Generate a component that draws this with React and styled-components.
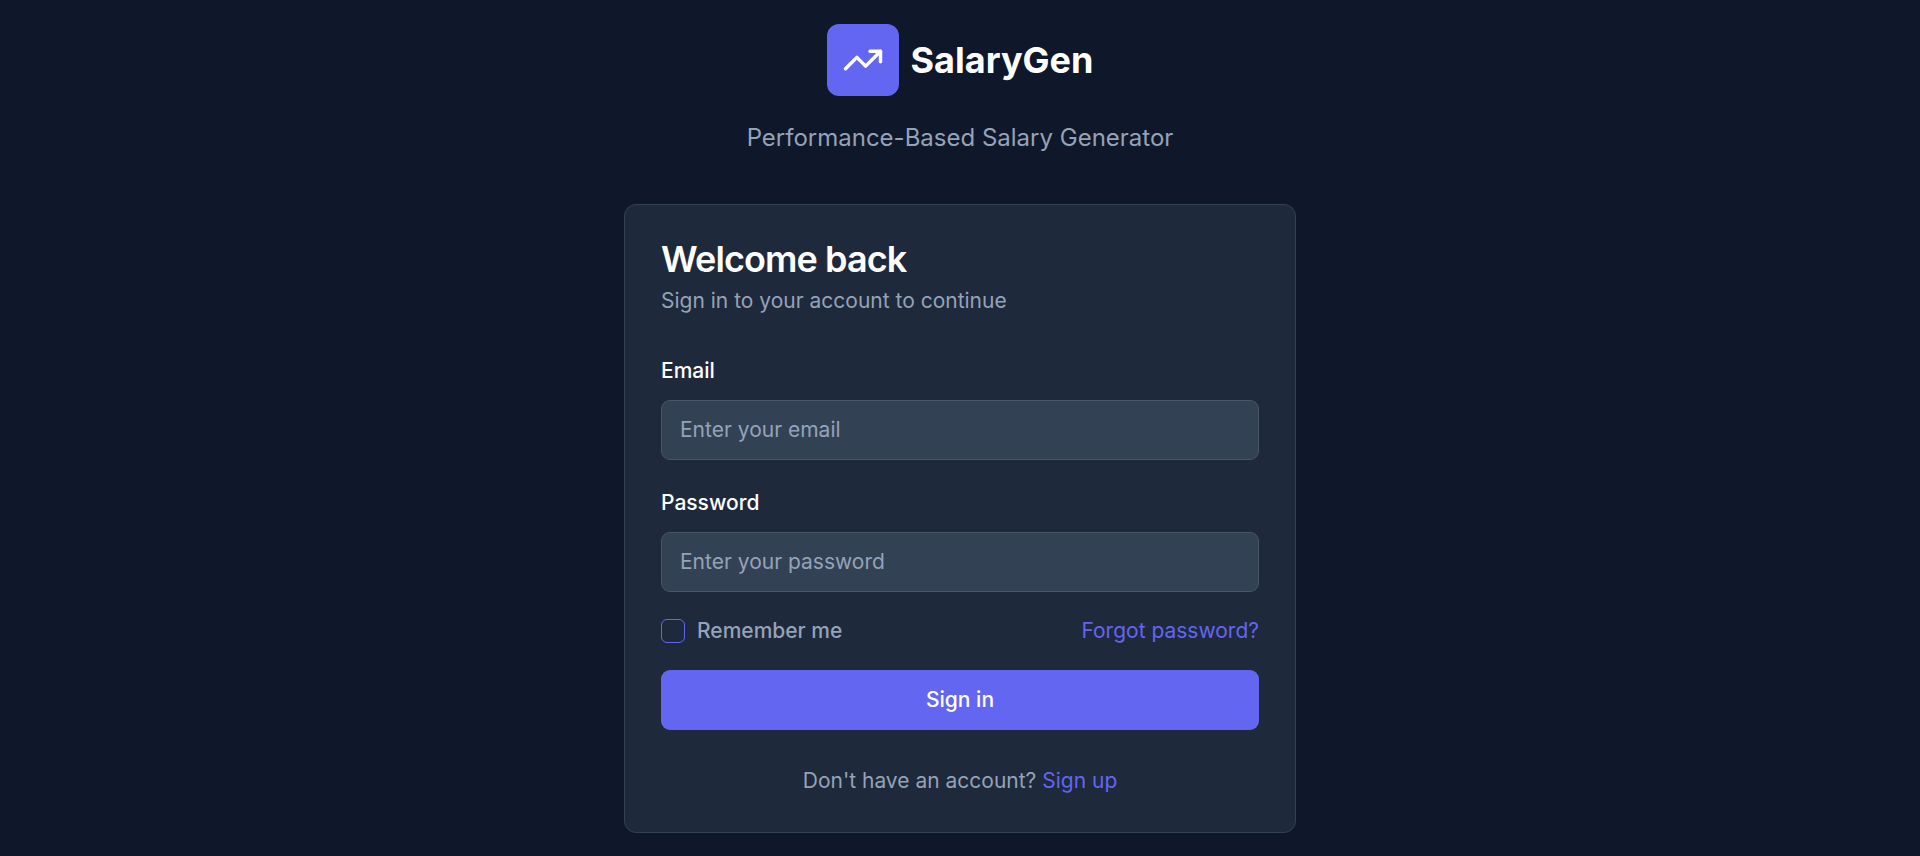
import React from "react";
import styled, { createGlobalStyle } from "styled-components";
import { TrendingUp } from "lucide-react";

const GlobalStyle = createGlobalStyle`
  *, *::before, *::after { box-sizing: border-box; }
  body {
    margin: 0;
    background: #0f172a;
    color: #ffffff;
    font-family: Inter, "Liberation Sans", sans-serif;
    font-size: 24px;
    line-height: 36px;
  }
`;

const Page = styled.main`
  min-height: 100vh;
  display: flex;
  align-items: center;
  justify-content: center;
  padding: 0 24px;
`;

const Column = styled.div`
  width: 100%;
  max-width: 672px;
  display: flex;
  flex-direction: column;
  gap: 48px;
`;

const Brand = styled.header`
  display: flex;
  flex-direction: column;
  align-items: center;
  gap: 24px;
`;

const BrandRow = styled.div`
  display: flex;
  align-items: center;
  gap: 12px;
`;

const Logo = styled.div`
  width: 72px;
  height: 72px;
  display: flex;
  align-items: center;
  justify-content: center;
  border-radius: 12px;
  background: #6366f1;
`;

const BrandName = styled.h1`
  margin: 0;
  font-size: 36px;
  line-height: 48px;
  font-weight: 700;
`;

const Tagline = styled.p`
  margin: 0;
  color: #94a3b8;
  text-align: center;
`;

const Card = styled.section`
  display: flex;
  flex-direction: column;
  gap: 36px;
  padding: 36px;
  border: 1px solid #334155;
  border-radius: 12px;
  background: #1e293b;
`;

const CardHeader = styled.div`
  display: flex;
  flex-direction: column;
  gap: 9px;
`;

const CardTitle = styled.h2`
  margin: 0;
  font-size: 36px;
  line-height: 36px;
  font-weight: 600;
  letter-spacing: -0.025em;
`;

const Text = styled.p`
  margin: 0;
  color: #94a3b8;
  font-size: 21px;
  line-height: 30px;
  text-align: ${({ $align }) => $align || "left"};
`;

const Form = styled.form`
  display: flex;
  flex-direction: column;
  gap: 24px;
`;

const Field = styled.div`
  display: flex;
  flex-direction: column;
  gap: 12px;
`;

const LabelRow = styled.div`
  height: 36px;
`;

const Label = styled.label`
  font-size: 21px;
  font-weight: 500;
`;

const Input = styled.input`
  width: 100%;
  height: 60px;
  padding: 0 18px;
  border: 1px solid #475569;
  border-radius: 9px;
  background: #334155;
  color: #ffffff;
  font: inherit;
  font-size: 21px;
  line-height: normal;

  &::placeholder { color: #94a3b8; opacity: 1; }
  &:focus-visible { outline: 2px solid #6366f1; outline-offset: 2px; }
`;

const Options = styled.div`
  display: flex;
  align-items: center;
  justify-content: space-between;
`;

const Remember = styled.label`
  display: flex;
  align-items: center;
  gap: 12px;
  color: #94a3b8;
  font-size: 21px;
  line-height: 30px;
  font-weight: 500;
`;

const Checkbox = styled.input`
  appearance: none;
  width: 24px;
  height: 24px;
  margin: 0;
  border: 1px solid #6366f1;
  border-radius: 6px;

  &:checked { background: #6366f1; }
`;

const Link = styled.a`
  color: #6366f1;
  font-size: 21px;
  line-height: 30px;
  text-decoration: none;

  &:hover { text-decoration: underline; }
`;

const Submit = styled.button`
  width: 100%;
  height: 60px;
  border: 0;
  border-radius: 9px;
  background: #6366f1;
  color: #ffffff;
  font: inherit;
  font-size: 21px;
  line-height: 30px;
  font-weight: 500;
  cursor: pointer;
`;

export default function App() {
  return (
    <>
      <GlobalStyle />
      <Page>
        <Column>
          <Brand>
            <BrandRow>
              <Logo>
                <TrendingUp size={42} color="#ffffff" aria-hidden="true" />
              </Logo>
              <BrandName>SalaryGen</BrandName>
            </BrandRow>
            <Tagline>Performance-Based Salary Generator</Tagline>
          </Brand>
          <Card>
            <CardHeader>
              <CardTitle>Welcome back</CardTitle>
              <Text>Sign in to your account to continue</Text>
            </CardHeader>
            <Form onSubmit={(event) => event.preventDefault()}>
              <Field>
                <LabelRow>
                  <Label htmlFor="email">Email</Label>
                </LabelRow>
                <Input id="email" type="email" placeholder="Enter your email" />
              </Field>
              <Field>
                <LabelRow>
                  <Label htmlFor="password">Password</Label>
                </LabelRow>
                <Input id="password" type="password" placeholder="Enter your password" />
              </Field>
              <Options>
                <Remember htmlFor="remember">
                  <Checkbox id="remember" type="checkbox" />
                  Remember me
                </Remember>
                <Link href="#forgot">Forgot password?</Link>
              </Options>
              <Submit type="submit">Sign in</Submit>
            </Form>
            <Text $align="center">
              Don't have an account? <Link href="#signup">Sign up</Link>
            </Text>
          </Card>
        </Column>
      </Page>
    </>
  );
}
